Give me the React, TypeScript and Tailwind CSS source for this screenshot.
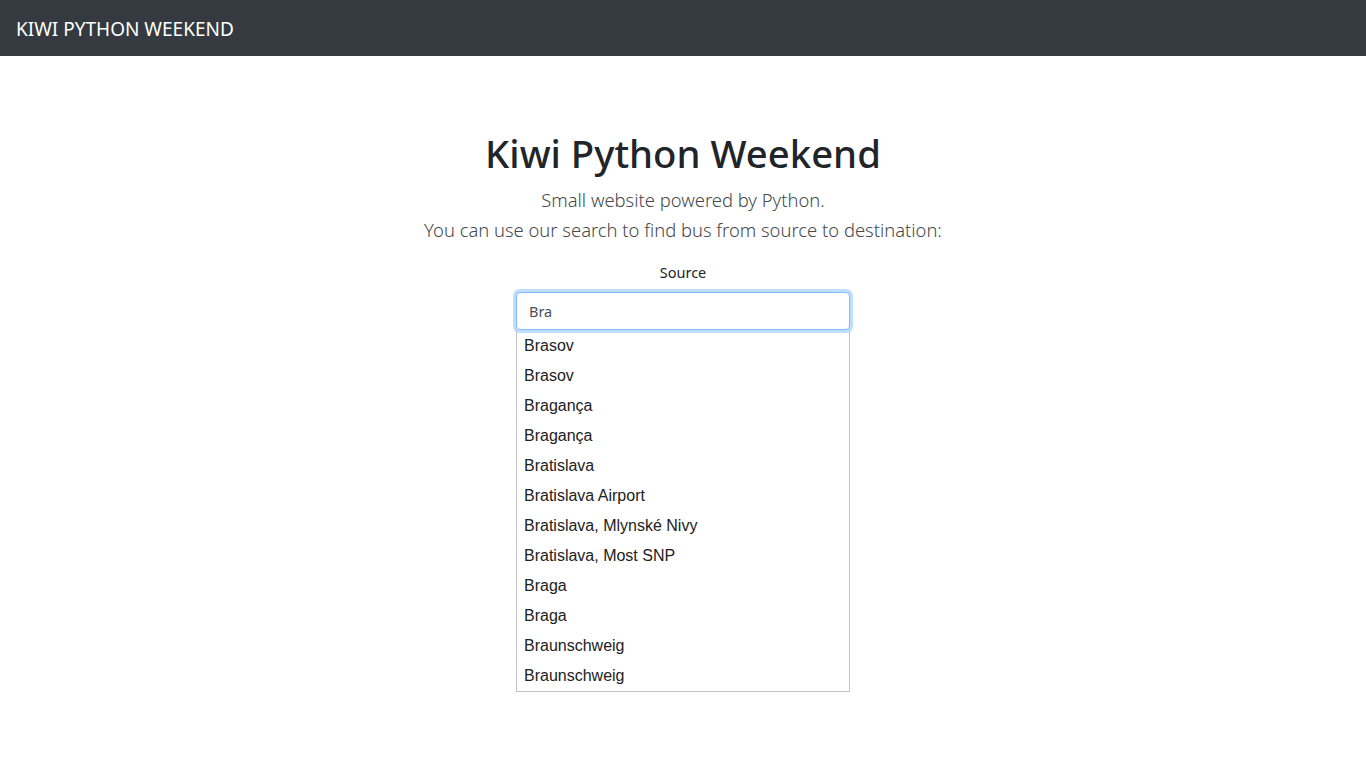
import React from "react";

const items = [
  "Brasov",
  "Brasov",
  "Bragança",
  "Bragança",
  "Bratislava",
  "Bratislava Airport",
  "Bratislava, Mlynské Nivy",
  "Bratislava, Most SNP",
  "Braga",
  "Braga",
  "Braunschweig",
  "Braunschweig",
];

export default function App() {
  return (
    <div className="min-h-screen bg-white">
      <nav className="h-14 bg-[#343a40] flex items-center px-4">
        <span className="text-white text-[19px] font-['Noto_Sans',sans-serif] leading-[30px] pt-[1px]">
          KIWI PYTHON WEEKEND
        </span>
      </nav>
      <main className="flex flex-col items-center pt-[73px] font-['Noto_Sans',sans-serif] text-[#212529]">
        <h1 className="text-[38.3px] font-medium leading-[48px] mb-[8px]">Kiwi Python Weekend</h1>
        <p className="text-[18.4px] font-light leading-[30px] text-center text-[#45494d]">
          Small website powered by Python.
          <br />
          You can use our search to find bus from source to destination:
        </p>
        <div className="mt-[15px] flex flex-col items-center">
          <label className="text-[14.5px] leading-[24px] mb-[8px]">Source</label>
          <div className="w-[334px]">
            <div className="h-[38px] rounded-[4px] border border-[#80bdff] shadow-[0_0_0_3px_rgba(0,123,255,0.25)] bg-white flex items-center px-3 pt-[1px]">
              <span className="text-[14.5px] text-[#495057]">Bra</span>
            </div>
            <ul className="border border-t-0 border-[#c4c4c4] font-['Liberation_Sans',Arial,sans-serif] text-[16px] text-[#222] pt-[1px]">
              {items.map((it, i) => (
                <li key={i} className="h-[30px] leading-[30px] px-[7px]">
                  {it}
                </li>
              ))}
            </ul>
          </div>
        </div>
      </main>
    </div>
  );
}
